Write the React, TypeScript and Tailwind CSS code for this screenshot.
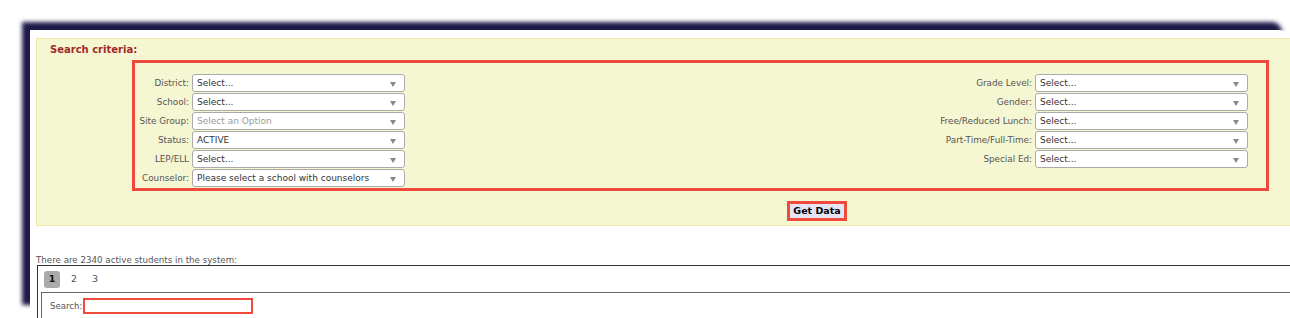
import React from "react";

const font = { fontFamily: '"DejaVu Sans", Verdana, sans-serif' };

function Select({ value, placeholder }: { value: string; placeholder?: boolean }) {
  return (
    <div className="relative flex h-[18px] w-[213px] items-center rounded-[3px] border border-[#aaaaaa] bg-white pl-[4px]">
      <span className={`text-[9px] leading-none ${placeholder ? "text-[#9a9a9a]" : "text-[#333333]"}`}>{value}</span>
      <span className="absolute right-[8px] top-[7px] h-0 w-0 border-l-[3px] border-r-[3px] border-t-[5px] border-l-transparent border-r-transparent border-t-[#888888]" />
    </div>
  );
}

function Row({ label, value, placeholder }: { label: string; value: string; placeholder?: boolean }) {
  return (
    <div className="flex h-[18px] items-center justify-end gap-[3px]">
      <span className="text-[8.8px] leading-none text-[#555555] whitespace-nowrap">{label}</span>
      <Select value={value} placeholder={placeholder} />
    </div>
  );
}

export default function App() {
  const left: [string, string, boolean?][] = [
    ["District:", "Select..."],
    ["School:", "Select..."],
    ["Site Group:", "Select an Option", true],
    ["Status:", "ACTIVE"],
    ["LEP/ELL", "Select..."],
    ["Counselor:", "Please select a school with counselors"],
  ];
  const right: [string, string][] = [
    ["Grade Level:", "Select..."],
    ["Gender:", "Select..."],
    ["Free/Reduced Lunch:", "Select..."],
    ["Part-Time/Full-Time:", "Select..."],
    ["Special Ed:", "Select..."],
  ];
  return (
    <div className="relative h-[318px] w-[1290px] overflow-hidden bg-white" style={font}>
      <div className="pl-[30px] pt-[30px]">
        <div className="h-[283px] w-[1260px] rounded-tr-[10px] bg-white shadow-[-8px_-8px_4px_#1d1a4a]">
          <div className="pl-[6px] pt-[8px]">
            {/* Search criteria panel */}
            <div className="h-[188px] w-[1300px] border border-[#f3e6a6] bg-[#f5f6d2]">
              <div className="pl-[13px] pt-[5px] text-[10px] font-bold leading-[12px] text-[#a3282a]">Search criteria:</div>
              <div className="ml-[95px] mt-[4px] h-[131px] w-[1137px] border-[3px] border-[#ef4a3c] pt-[11px]">
                <div className="flex justify-between pr-[18px]">
                  <div className="flex w-[270px] flex-col gap-[1px]">
                    {left.map(([l, v, p]) => (
                      <Row key={l} label={l} value={v} placeholder={p} />
                    ))}
                  </div>
                  <div className="flex w-[320px] flex-col gap-[1px]">
                    {right.map(([l, v]) => (
                      <Row key={l} label={l} value={v} />
                    ))}
                  </div>
                </div>
              </div>
              <div className="ml-[750px] mt-[10px] flex h-[20px] w-[60px] items-center justify-center border-[3px] border-[#ef4a3c] bg-[#e4e4f4]">
                <span className="text-[9.5px] font-bold leading-none text-black">Get Data</span>
              </div>
            </div>
            {/* results */}
            <div className="mt-[29px] text-[8.7px] leading-[10px] text-[#555555]">There are 2340 active students in the system:</div>
            <div className="ml-[1px] w-[1300px] border-l border-t border-[#333333] pl-[3px]">
              <div className="flex h-[26px] items-center gap-[7px] pl-[3px] pt-[1px]">
                <span className="flex h-[17px] w-[16px] items-center justify-center rounded-[3px] bg-[#aaaaaa] text-[9.5px] font-bold text-[#111111]">1</span>
                <span className="w-[14px] text-center text-[9.5px] text-[#555555]">2</span>
                <span className="w-[14px] text-center text-[9.5px] text-[#555555]">3</span>
              </div>
              <div className="h-[40px] border-l border-t border-[#666666] pl-[8px] pt-[5px]">
                <div className="flex items-center gap-[1px]">
                  <span className="text-[8.6px] text-[#555555]">Search:</span>
                  <div className="h-[16px] w-[170px] border-2 border-[#ef4a3c] bg-white" />
                </div>
              </div>
            </div>
          </div>
        </div>
      </div>
    </div>
  );
}
